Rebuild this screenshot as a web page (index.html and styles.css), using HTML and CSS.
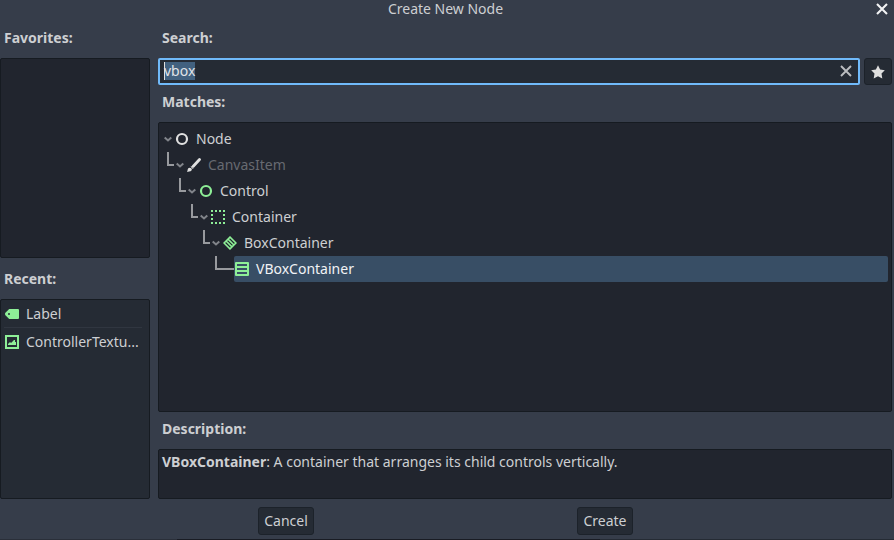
FILE: index.html
```
<!DOCTYPE html>
<html lang="en">
<head>
<meta charset="utf-8">
<title>Create New Node</title>
<link rel="stylesheet" href="styles.css">
</head>
<body>
<div class="dialog">
  <header class="titlebar">
    <span class="title">Create New Node</span>
    <svg class="close" width="12" height="12" viewBox="0 0 12 12"><path d="M1 1l10 10M11 1l-10 10"/></svg>
  </header>
  <main class="content">
    <section class="side">
      <h2 class="label label-first">Favorites:</h2>
      <div class="panel favorites"></div>
      <h2 class="label label-recent">Recent:</h2>
      <ul class="panel recent">
        <li class="recent-item"><svg width="14" height="14" viewBox="0 0 14 14"><path class="fill" fill-rule="evenodd" d="M4.2 2H13Q14 2 14 3V11Q14 12 13 12H4.200L.4 8.200Q-.4 7 .4 5.800ZM4 6a1 1 0 1 0 0 2a1 1 0 1 0 0-2Z"/></svg><span>Label</span></li>
        <li class="recent-item"><svg width="14" height="14" viewBox="0 0 14 14"><path class="fill" fill-rule="evenodd" d="M0 0h14v14H0zM2 2v10h10V2zM3 10V9l2-2 1 1 3-3h1v2h1v3z"/></svg><span>ControllerTextu...</span></li>
      </ul>
    </section>
    <section class="main">
      <h2 class="label label-first">Search:</h2>
      <div class="search-row">
        <div class="search"><span class="query">vbox</span><svg width="12" height="12" viewBox="0 0 12 12"><path d="M1 1l10 10M11 1l-10 10"/></svg></div>
        <div class="star"><svg width="14" height="14" viewBox="0 0 14 14"><path d="M7 .3l2.100 4.200 4.700.700-3.300 3.300.8 4.900L7 11.300l-4.300 2.100.8-4.900L.2 5.200l4.700-.7z"/></svg></div>
      </div>
      <h2 class="label label-matches">Matches:</h2>
      <div class="panel tree">
        <div class="row level-0"><svg class="arrow" width="8" height="6" viewBox="0 0 8 6"><path d="M.7 1.500L4 4.500l3.300-3"/></svg><svg class="icon white" width="14" height="14" viewBox="0 0 14 14"><circle cx="7" cy="7" r="5"/></svg><span>Node</span></div>
        <div class="row level-1"><i class="branch"></i><svg class="arrow" width="8" height="6" viewBox="0 0 8 6"><path d="M.7 1.500L4 4.500l3.300-3"/></svg><svg class="icon brush" width="14" height="14" viewBox="0 0 14 14"><path class="handle" d="M12.500 1.500L6.300 8.200"/><path class="ferrule" d="M5.400 9.100L4.700 9.800"/><path class="tip" d="M2.700 9.700Q5 9.800 4.900 11.600 4.600 13.800 0 13.900.6 13 .6 11.800.9 9.800 2.700 9.700z"/></svg><span class="muted">CanvasItem</span></div>
        <div class="row level-2"><i class="branch"></i><svg class="arrow" width="8" height="6" viewBox="0 0 8 6"><path d="M.7 1.500L4 4.500l3.300-3"/></svg><svg class="icon" width="14" height="14" viewBox="0 0 14 14"><circle cx="7" cy="7" r="5"/></svg><span>Control</span></div>
        <div class="row level-3"><i class="branch"></i><svg class="arrow" width="8" height="6" viewBox="0 0 8 6"><path d="M.7 1.500L4 4.500l3.300-3"/></svg><svg class="icon" width="14" height="14" viewBox="0 0 14 14"><path class="dots" d="M0 1h14M0 13h14M1 4v2M1 8v2M13 4v2M13 8v2"/></svg><span>Container</span></div>
        <div class="row level-4"><i class="branch"></i><svg class="arrow" width="8" height="6" viewBox="0 0 8 6"><path d="M.7 1.500L4 4.500l3.300-3"/></svg><svg class="icon diamond" width="14" height="14" viewBox="0 0 14 14"><path d="M7 1.100L12.900 7 7 12.900 1.100 7zM5 3.100L10.900 9M3.100 5L9 10.900"/></svg><span>BoxContainer</span></div>
        <div class="row level-5"><i class="branch leaf"></i><div class="selected"><svg class="icon" width="14" height="14" viewBox="0 0 14 14"><path class="fill" fill-rule="evenodd" d="M1 0H13Q14 0 14 1V13Q14 14 13 14H1Q0 14 0 13V1Q0 0 1 0ZM2 2v2h10V2zM2 6v2h10V6zM2 10v2h10v-2z"/></svg><span>VBoxContainer</span></div></div>
      </div>
      <h2 class="label label-description">Description:</h2>
      <p class="panel description"><b>VBoxContainer</b>: A container that arranges its child controls vertically.</p>
    </section>
  </main>
  <footer class="actions"><button>Cancel</button><button>Create</button></footer>
  <div class="edge"></div>
</div>
</body>
</html>
```
FILE: styles.css
```
* { box-sizing: border-box; }
body { margin: 0; background: #363d4a; color: #cdcfd2; font: 14px/20px "Noto Sans", sans-serif; }
svg { display: block; flex: none; fill: none; }
.dialog { width: 894px; height: 540px; display: flex; flex-direction: column; overflow: hidden; }
.titlebar { height: 18px; display: grid; grid-template-columns: 1fr auto 1fr; flex: none; }
.title { grid-column: 2; margin: -1px 3px 0 0; }
.close { justify-self: end; margin: 3px 6px 0 0; stroke: #f2f3f4; stroke-width: 2.1; }
.content { display: flex; gap: 8px; height: 481px; padding-right: 2px; flex: none; }
.side { width: 150px; }
.main { flex: 1; min-width: 0; }
.label { margin: 0; padding-left: 4px; font-size: 14px; line-height: 20px; font-weight: 700; }
.label-first { height: 40px; padding-top: 10px; }
.label-recent { height: 41px; padding-top: 11px; }
.label-matches { height: 37px; padding-top: 7px; }
.label-description { height: 37px; padding-top: 7px; }
.panel { margin: 0; background: #21252e; border: 1px solid #161b21; border-radius: 2px; }
.favorites { height: 200px; }
.recent { height: 200px; padding: 0 7px 0 3px; list-style: none; background: #252b34; }
.recent-item { display: flex; align-items: center; gap: 7px; height: 28px; padding-left: 1px; white-space: nowrap; }
.recent-item:first-child { height: 27px; padding-top: 1px; }
.recent-item + .recent-item { border-top: 1px solid #303640; }
.fill { fill: #8eef97; stroke: none; }
.search-row { display: flex; gap: 4px; height: 27px; }
.search { flex: 1; display: flex; justify-content: space-between; align-items: flex-start; padding: 2px 6px 0 4px; background: #252b34; border: 2px solid #70bafa; border-radius: 2px; }
.search svg { margin-top: 3px; stroke: #bbbdc0; stroke-width: 1.9; }
.query { height: 18px; line-height: 18px; background: #42617f; color: #e0e4e8; box-shadow: inset 1px 0 #e0e0e0; }
.star { width: 28px; display: grid; place-items: center; background: #252b34; border: 1px solid #1c222a; border-radius: 3px; }
.star svg { fill: #e0e0e0; }
.tree { height: 290px; padding: 3px; }
.row { display: flex; align-items: center; height: 26px; padding-left: 2px; }
.level-1 { padding-left: 5px; }
.level-2 { padding-left: 17px; }
.level-3 { padding-left: 29px; }
.level-4 { padding-left: 41px; }
.level-5 { padding-left: 53px; }
.arrow { margin-right: 3px; stroke: #81848a; stroke-width: 2; }
.icon { margin-right: 7px; stroke: #8eef97; stroke-width: 2.2; }
.white { stroke: #e0e0e0; }
.brush { stroke: #e0e0e0; }
.handle { stroke-width: 2.8; stroke-linecap: round; }
.ferrule { stroke-width: 3.2; }
.tip { fill: #e0e0e0; stroke: none; }
.diamond { stroke-width: 1.6; }
.dots { stroke-width: 2; stroke-dasharray: 2 2; }
.muted { color: #676a71; }
.branch { align-self: flex-start; width: 7px; height: 14px; margin-right: 2px; border: solid #989a9e; border-width: 0 0 2px 2px; }
.leaf { width: 19px; margin-right: 0; }
.selected { flex: 1; display: flex; align-items: center; height: 26px; padding-left: 1px; background: #384e65; border-radius: 2px; color: #f1f3f5; }
.description { height: 50px; padding: 2px 3px; }
.actions { flex: 1; display: flex; justify-content: space-between; padding: 8px 261px 0 258px; }
.actions button { width: 56px; height: 28px; padding: 0; border: 1px solid #1c222a; border-radius: 3px; background: #252b34; color: inherit; font: inherit; }
.edge { height: 1px; flex: none; background: linear-gradient(90deg, #2a2f39 177px, #191c24 177px 600px, #252b34 600px); }
```
